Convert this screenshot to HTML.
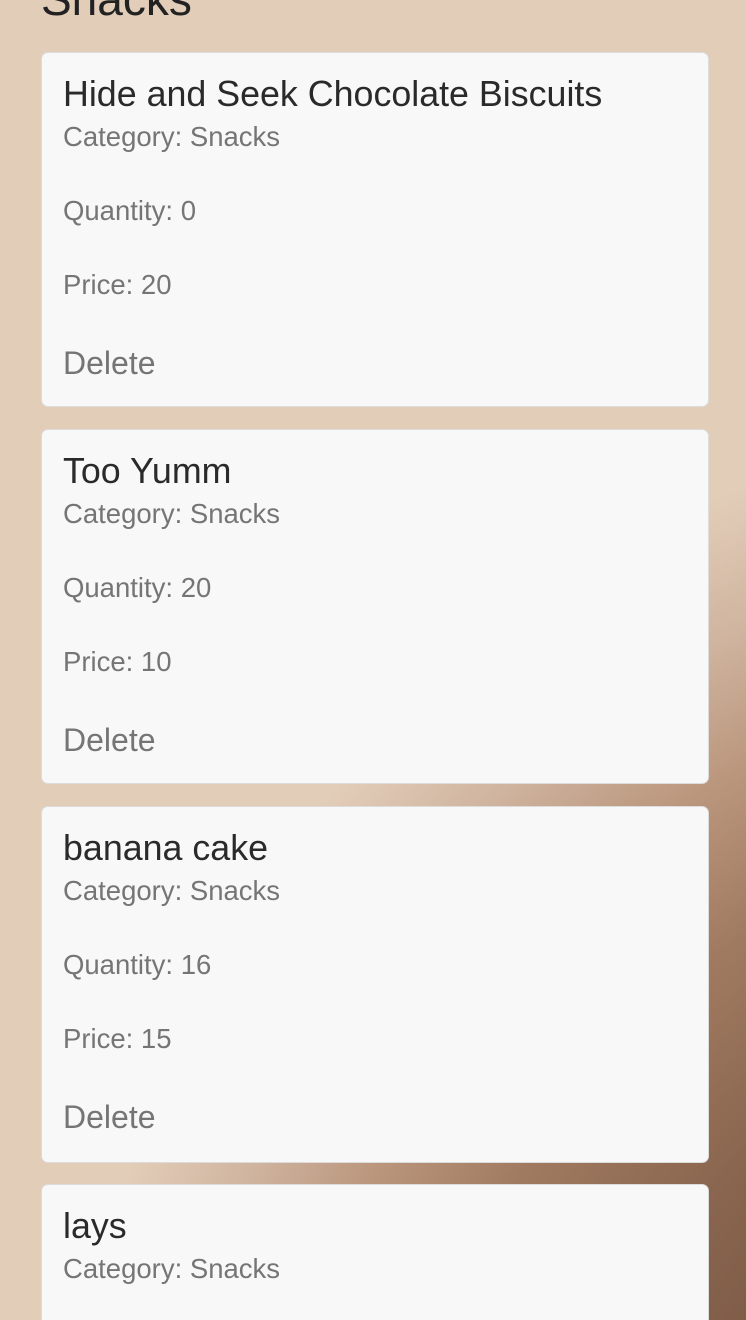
<!DOCTYPE html>
<html><head><meta charset="utf-8"><style>
html,body{margin:0;padding:0;width:746px;height:1320px;overflow:hidden}
body{position:relative;font-family:"Liberation Sans",Arial,sans-serif;
background:
radial-gradient(ellipse 1100px 1300px at 1050px 1600px,#6f4e3c 0%,#7a5843 30%,#8a6650 44%,#a07a60 58%,#bb977e 70%,#d0b5a0 80%,rgba(226,205,185,0) 90%),
#e2cdb9;}
h1{position:absolute;left:41px;top:-24px;margin:0;font-size:46px;font-weight:normal;color:#222;line-height:46px}
.card{position:absolute;left:41px;width:668px;height:355px;background:#f8f8f8;border:1px solid #dcdcdc;border-radius:7px;box-sizing:border-box}
.card div{position:absolute;left:21px;white-space:nowrap;line-height:1}
.t{font-size:35.8px;color:#2a2a2a;top:24px}
.c,.q,.p{font-size:27.5px;color:#757575}
.c{top:70px}.q{top:144px}.p{top:218px}
.d{font-size:32px;color:#757575;top:294px}
</style></head><body>
<h1>Snacks</h1>
<div class="card" style="top:52px"><div class="t">Hide and Seek Chocolate Biscuits</div><div class="c">Category: Snacks</div><div class="q">Quantity: 0</div><div class="p">Price: 20</div><div class="d">Delete</div></div>
<div class="card" style="top:429px"><div class="t">Too Yumm</div><div class="c">Category: Snacks</div><div class="q">Quantity: 20</div><div class="p">Price: 10</div><div class="d">Delete</div></div>
<div class="card" style="top:806px;height:357px"><div class="t">banana cake</div><div class="c">Category: Snacks</div><div class="q">Quantity: 16</div><div class="p">Price: 15</div><div class="d">Delete</div></div>
<div class="card" style="top:1184px;height:136px;border-bottom:none;border-radius:7px 7px 0 0"><div class="t">lays</div><div class="c">Category: Snacks</div></div>
</body></html>
